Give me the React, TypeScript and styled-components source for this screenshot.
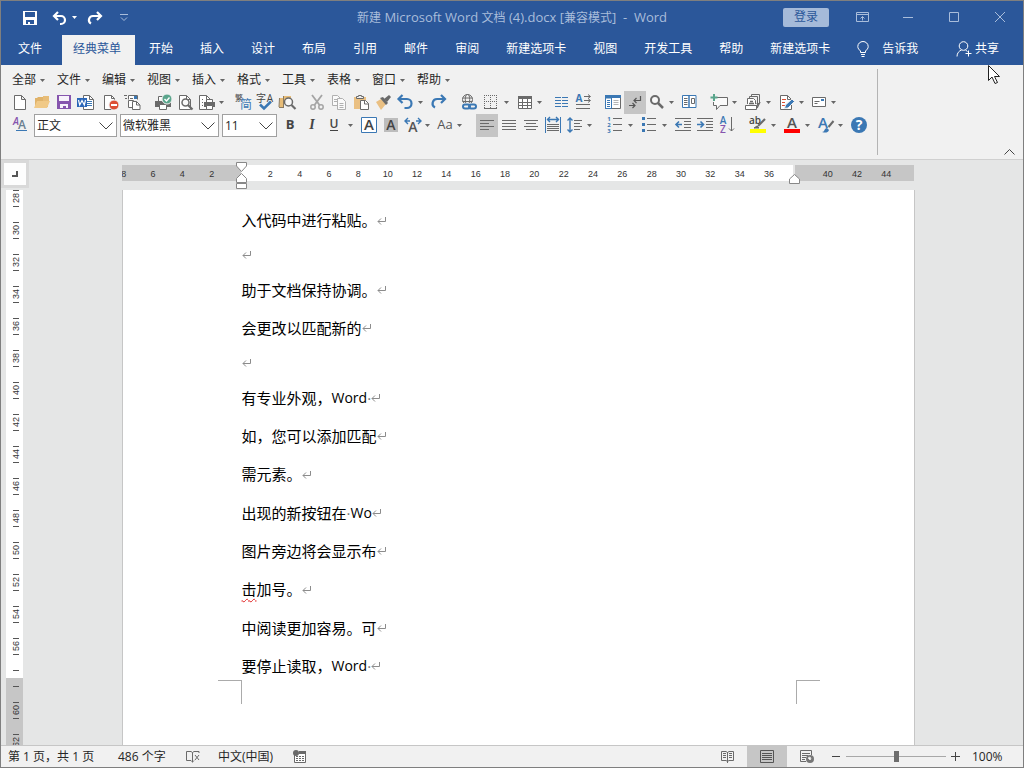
import React from "react";
import styled, { createGlobalStyle, css } from "styled-components";

const uiFont = `"Open Sans", "Noto Sans CJK SC", sans-serif`;
const blue = "#2b579a";
const gray = "#6a6a6a";
const accent = "#3b78b4";

const GlobalStyle = createGlobalStyle`
  *, *::before, *::after { box-sizing: border-box; }
  body { margin: 0; background: #e6e6e6; }
  button, select, input { font: inherit; color: inherit; margin: 0; }
  button { border: 0; background: none; padding: 0; }
`;

const Window = styled.div`
  display: flex;
  flex-direction: column;
  height: 100vh;
  overflow: hidden;
  border: 1px solid #7f7f7f;
  font: 12px/18px ${uiFont};
  color: #262626;
  background: #e6e6e6;
`;

const Svg = styled.svg`
  display: block;
  flex: none;
  overflow: visible;
  fill: none;
  stroke: ${gray};
  stroke-width: 1;
`;

/* ---------- title bar and tabs ---------- */

const TitleBar = styled.header`
  display: flex;
  align-items: center;
  height: 34px;
  flex: none;
  background: ${blue};
  color: #a9bddb;
`;

const QuickAccess = styled.div`
  display: flex;
  align-items: center;
  flex: 1 1 20px;
  padding-left: 17px;
`;

const QuickButton = styled.button<{ $width: number }>`
  display: flex;
  align-items: center;
  justify-content: center;
  width: ${(p) => p.$width}px;
  height: 28px;
`;

const Title = styled.h1`
  margin: 0 0 2px;
  font-size: 12px;
  font-weight: 400;
  white-space: pre;
`;

const TitleLatin = styled.span`
  font-size: 13px;
`;

const WindowControls = styled.div`
  display: flex;
  align-items: center;
  justify-content: flex-end;
  flex: 1 1 20px;
`;

const SignIn = styled.button`
  width: 46px;
  height: 19px;
  margin: 0 10px 2px 0;
  border-radius: 2px;
  background: #a5bad9;
  color: ${blue};
  line-height: 18px;
`;

const CaptionButton = styled.button`
  display: flex;
  align-items: center;
  justify-content: center;
  width: 46px;
  height: 30px;
  padding-bottom: 2px;
`;

const TabBar = styled.nav`
  display: flex;
  height: 30px;
  flex: none;
  background: ${blue};
  color: #fff;
`;

const Tab = styled.button<{ $kind?: "file" | "active" }>`
  display: flex;
  align-items: center;
  height: 30px;
  padding: 0 13px 2px 14px;
  white-space: nowrap;
  ${(p) => p.$kind === "file" && css`padding: 0 20px 2px 17px;`}
  ${(p) =>
    p.$kind === "active" &&
    css`
      padding: 0 14px 2px 11px;
      background: #f1f1f1;
      color: ${blue};
    `}
`;

const IconTab = styled(Tab)`
  gap: 13px;
  padding-left: 14px;
`;

const ShareTab = styled(Tab)`
  gap: 3px;
  margin-left: auto;
  padding-right: 24px;
`;

/* ---------- ribbon ---------- */

const Ribbon = styled.section`
  display: flex;
  flex: none;
  height: 95px;
  border-bottom: 1px solid #d0d0d0;
  background: #f1f1f1;
`;

const Commands = styled.div`
  display: flex;
  flex-direction: column;
  margin: 4px 0;
  padding: 0 8px 0 6px;
  border-right: 1px solid #b4b4b4;
`;

const CommandRow = styled.div`
  display: flex;
  align-items: center;
  height: 23px;
`;

const MenuRow = styled(CommandRow)`
  height: 22px;
  padding-left: 5px;
`;

const MenuButton = styled.button`
  display: flex;
  align-items: center;
  justify-content: space-between;
  width: 45px;
  height: 20px;
  padding-right: 12px;
`;

const ToolGroup = styled.div<{ $gap?: number }>`
  display: flex;
  align-items: center;
  margin-left: ${(p) => p.$gap ?? 0}px;
`;

const ToolButton = styled.button<{ $split?: "narrow" | "wide"; $pressed?: boolean }>`
  display: flex;
  align-items: center;
  width: ${(p) => (p.$split === "wide" ? 34 : p.$split ? 32 : 22)}px;
  height: 23px;
  padding: 0 0 1px 2px;
  gap: ${(p) => (p.$split === "wide" ? 4 : 3)}px;
  background: ${(p) => (p.$pressed ? "#c5c5c5" : "transparent")};
`;

const Combo = styled.label<{ $width: number }>`
  display: grid;
  align-items: center;
  width: ${(p) => p.$width}px;
  height: 23px;
  margin-right: 3px;
  border: 1px solid #a0a0a0;
  background: #fff;

  > * { grid-area: 1 / 1; }
  > svg { justify-self: end; margin-right: 3px; pointer-events: none; }
`;

const ComboSelect = styled.select`
  width: 100%;
  height: 21px;
  padding: 0 0 0 2px;
  border: 0;
  appearance: none;
  background: transparent;
`;

const CollapseButton = styled.button`
  display: flex;
  align-self: flex-end;
  margin: 0 8px 2px auto;
  padding: 2px 0;
`;

/* ---------- document ---------- */

const Workspace = styled.main`
  display: flex;
  flex: 1 1 0;
  min-height: 0;
  background: #e5e6e6;
`;

const RulerColumn = styled.div`
  display: flex;
  flex-direction: column;
  width: 28px;
  flex: none;
`;

const TabStop = styled.button`
  display: flex;
  align-items: center;
  justify-content: center;
  flex: none;
  width: 28px;
  height: 28px;
  margin-bottom: 2px;
  border: 3px solid #d9d9d9;
  background: #fdfdfd;
`;

const VerticalRuler = styled.ol`
  flex: 1 1 0;
  min-height: 0;
  width: 17px;
  margin: 0 0 0 5px;
  padding: 0 0 0 2px;
  overflow: hidden;
  list-style: none;
  background: linear-gradient(#fff 488px, #c6c6c6 488px);
  font: 9px/14px "Liberation Sans", sans-serif;
  color: #333;
`;

const VerticalMark = styled.li`
  display: flex;
  flex-direction: column;
  align-items: center;
  justify-content: space-between;
  height: 17px;
  margin-bottom: 15px;

  &::before,
  &::after {
    content: "";
    width: 6px;
    height: 1px;
    background: #555;
  }
`;

const VerticalNumber = styled.span`
  writing-mode: vertical-rl;
  transform: rotate(180deg);
`;

const Canvas = styled.div`
  display: flex;
  flex-direction: column;
  align-items: center;
  flex: 1 1 0;
  min-width: 0;
  padding-right: 16px;
`;

const HorizontalRuler = styled.div`
  position: relative;
  flex: none;
  width: 793px;
  height: 30px;
  padding-top: 5px;
`;

const RulerScale = styled.ol`
  display: grid;
  grid-template-columns: repeat(27, 1fr);
  width: 792px;
  height: 16px;
  margin: 0;
  padding: 0;
  overflow: hidden;
  list-style: none;
  background: linear-gradient(
    90deg,
    #c6c6c6 119px,
    #fff 119px,
    #fff 671px,
    #e6e6e6 671px,
    #e6e6e6 673px,
    #c6c6c6 673px
  );
  font: 9px/18px "Liberation Sans", sans-serif;
  color: #333;
  text-align: center;

  > li { margin: 0 0 0 -25px; }
`;

const IndentMarker = styled(Svg)<{ $left: number }>`
  position: absolute;
  top: 0;
  left: ${(p) => p.$left}px;
`;

const Page = styled.article`
  flex: 1 1 0;
  min-height: 0;
  width: 793px;
  padding-top: 11px;
  overflow: hidden;
  border: solid #c6c6c6;
  border-width: 0 1px;
  background: #fff;
`;

const Body = styled.div`
  display: flex;
  flex-direction: column;
  justify-content: space-between;
  height: 484px;
  padding-left: 119px;
  color: #000;
  font-size: 15px;
`;

const Line = styled.p<{ $empty?: boolean }>`
  display: flex;
  align-items: center;
  height: ${(p) => (p.$empty ? 31 : 38)}px;
  margin: 0;
  line-height: 38px;
  white-space: pre;
`;

const Latin = styled.span`
  font-size: 14px;
`;

const SpaceDot = styled.span`
  width: 4px;
  overflow: hidden;
  color: #777;
`;

const Misspelled = styled.span`
  text-decoration: underline wavy #e02020 1px;
  text-underline-offset: 3px;
`;

const CropMarks = styled.div`
  display: flex;
  justify-content: space-between;
  margin-top: -5px;
  padding: 0 94px 0 95px;
`;

const CropMark = styled.span<{ $side: "left" | "right" }>`
  width: 24px;
  height: 24px;
  border: solid #ababab;
  border-width: ${(p) => (p.$side === "left" ? "1px 1px 0 0" : "1px 0 0 1px")};
`;

/* ---------- status bar ---------- */

const StatusBar = styled.footer`
  display: flex;
  align-items: center;
  height: 22px;
  flex: none;
  padding-left: 7px;
  border-top: 1px solid #c6c6c6;
  background: #f1f1f1;
`;

const StatusButton = styled.button<{ $width: number }>`
  display: flex;
  align-items: center;
  width: ${(p) => p.$width}px;
  height: 21px;
  white-space: nowrap;
`;

const StatusRight = styled.div`
  display: flex;
  align-items: center;
  margin-left: auto;
`;

const ViewButton = styled.button<{ $active?: boolean }>`
  display: flex;
  align-items: center;
  justify-content: center;
  width: 40px;
  height: 21px;
  background: ${(p) => (p.$active ? "#c6c6c6" : "transparent")};
`;

const StepButton = styled.button`
  display: flex;
  align-items: center;
  justify-content: center;
  width: 19px;
  height: 21px;
`;

const ZoomSlider = styled.input`
  width: 100px;
  height: 20px;
  appearance: none;
  background: linear-gradient(#a8a8a8, #a8a8a8) center / 100% 1px no-repeat;

  &::-webkit-slider-thumb {
    appearance: none;
    width: 5px;
    height: 11px;
    background: #6d6d6d;
  }
`;

const ZoomValue = styled.button`
  width: 58px;
  height: 21px;
  padding-left: 7px;
  text-align: left;
`;

const Pointer = styled(Svg)`
  position: absolute;
  top: 65px;
  left: 988px;
  pointer-events: none;
`;

/* ---------- icons ---------- */

const Arrow = () => (
  <Svg width="5" height="3" viewBox="0 0 5 3" stroke="none">
    <path d="M0 0h5L2.500 3z" fill="#666" stroke="none" />
  </Svg>
);

const pageShape = "M4.500 2.500h7l4 4v10h-11z M11.500 2.500v4h4";

const glyph = (
  text: string,
  x: number,
  y: number,
  size: number,
  color: string,
  weight = 400,
  extra: React.SVGProps<SVGTextElement> = {}
) => (
  <text x={x} y={y} fontSize={size} fill={color} stroke="none" fontWeight={weight} textAnchor="middle" {...extra}>
    {text}
  </text>
);

const icons: Record<string, React.ReactNode> = {
  new: <path d={pageShape} fill="#fff" />,
  open: (
    <g stroke="none">
      <path d="M3 14V5h2l1-1h5l1 2h4v8z" fill="#e0b36a" />
      <path d="M11 3h6v5h-6z" fill="#e8bd78" />
      <path d="M2 15l3-7h13l-3 7z" fill="#f0c987" />
    </g>
  ),
  save: (
    <g stroke="none">
      <path d="M3 2h14v14H3z" fill="#8655ae" />
      <path d="M5 3h10v5H5zM6 11h8v4h-2v-2H9v2H6z" fill="#f7f2fb" />
    </g>
  ),
  word: (
    <>
      <path d="M7.500 2.500h6l4 4v10h-10z" fill="#fff" />
      <path d="M13.500 2.500v4h4" />
      <path d="M11 8.500h5M11 10.500h5M11 12.500h5" stroke={accent} />
      <path d="M1 5h10v9H1z" fill="#2a66b8" stroke="none" />
      <path d="M2.500 7l1.200 5L6 7.500 8.300 12l1.200-5" stroke="#fff" strokeWidth="1.200" />
    </>
  ),
  remove: (
    <>
      <path d="M2.500 2.500h7l3 3v11h-10z" fill="#fff" />
      <path d="M9.500 2.500v3h3" />
      <circle cx="12" cy="12" r="5" fill="#dc4e34" stroke="#f1f1f1" />
      <path d="M9 12h6" stroke="#fff" strokeWidth="2" />
    </>
  ),
  props: (
    <>
      <path d="M0 2.500h3M1 5.500h2" />
      <path d="M4.500 6.500v-4h9v4" fill="#fff" />
      <path d="M6 5.500h3" />
      <path d="M10 3h3v3h-3z" fill={accent} stroke="none" />
      <path d="M4.500 7.500h5v7h-5z" fill="#fff" />
      <path d="M8.500 8.500h4l3.500 3.500v4.500H8.500z" fill="#fff" />
      <path d="M12.500 8.500v3.500h3.500" />
    </>
  ),
  print: (
    <>
      <path d="M1 8h16v6H1z" fill={gray} stroke="none" />
      <path d="M4.500 8V3.500h6M5.500 11.500h7v5h-7z" fill="#fff" />
      <circle cx="13" cy="6" r="5" fill="#5aa58c" stroke="#f1f1f1" />
      <path d="M10.500 6l2 2L15.500 4.500" stroke="#fff" strokeWidth="1.400" />
    </>
  ),
  preview: (
    <>
      <path d="M3.500 2.500h7l4 4v10h-11z" fill="#fff" />
      <path d="M10.500 2.500v4h4" />
      <circle cx="9.500" cy="9.500" r="3.500" fill="#f8f8f8" strokeWidth="1.500" />
      <path d="M12 12l4.500 4.500" strokeWidth="2.200" />
    </>
  ),
  setup: (
    <>
      <path d="M9 16.500H1.500v-14h7l4 4" fill="#fff" />
      <path d="M8.500 2.500v4h4M4 6.500h1M4 9.500h1M4 12.500h1" />
      <path d="M6 9h11v5H6z" fill={gray} stroke="none" />
      <path d="M8.500 9V6.500h6V9M8.500 12.500h6v4h-6z" fill="#fff" />
    </>
  ),
  simplified: (
    <>
      {glyph("繁", 5, 8, 8, "#444")}
      {glyph("简", 12, 16, 12, accent)}
    </>
  ),
  spelling: (
    <>
      {glyph("字", 5, 9, 10, "#444")}
      {glyph("A", 14, 9, 10, "#444")}
      <path d="M4 11.500l4 4L15 8.500" stroke={accent} strokeWidth="2.500" />
    </>
  ),
  research: (
    <>
      <path d="M2 5h3v10H1zM6 3h4v4H6zM9 3h4v2H9z" fill="#e8bd78" stroke="none" />
      <path d="M1.500 5l-.500 9M5.500 3v12M1 14.500h5" stroke="#8a7a60" />
      <circle cx="10.500" cy="9" r="4" fill="#f8f8f8" strokeWidth="1.500" />
      <path d="M13.500 12l4 4" strokeWidth="2.200" />
    </>
  ),
  cut: (
    <g stroke="#a4a4a4">
      <path d="M4 2l7.500 10M14 2L6.500 12" strokeWidth="1.800" />
      <circle cx="5" cy="14" r="2.200" strokeWidth="1.500" />
      <circle cx="13" cy="14" r="2.200" strokeWidth="1.500" />
    </g>
  ),
  copy: (
    <g stroke="#b0b0b0" fill="#fafafa">
      <path d="M2.500 2.500h5l3 3v7h-8z" />
      <path d="M7.500 5.500h5l3 3v8h-8z" />
      <path d="M4 6.500h3M4 8.500h3M9.500 10.500h4M9.500 12.500h4M9.500 14.500h4" />
    </g>
  ),
  paste: (
    <>
      <path d="M2 4h12v12H2z" fill="#eac083" stroke="none" />
      <path d="M4.500 5.500h7V3.500H9.500v-1h-3v1h-2z" fill="#eee" />
      <path d="M8.500 7.500h5l3 3v6h-8z" fill="#fff" />
      <path d="M12.500 7.500v3.500h4" />
    </>
  ),
  painter: (
    <g stroke="none">
      <path d="M2 9l5-3 5 5-5 6z" fill="#eac083" />
      <path d="M6 5l3-1 5 6-2 2z" fill={gray} />
      <path d="M10 6l5-4 2 2-4 5z" fill={gray} />
    </g>
  ),
  undo: (
    <path d="M6.500 2L2.500 6l4 4M3 6h8a4.500 4.500 0 0 1 0 9H8.500" stroke={accent} strokeWidth="2.200" />
  ),
  redo: (
    <path d="M11 2l4 4-4 4M15 6H7a4.500 4.500 0 0 0-2 8.500" stroke={accent} strokeWidth="2.200" />
  ),
  link: (
    <>
      <circle cx="7.500" cy="6.500" r="5" />
      <ellipse cx="7.500" cy="6.500" rx="2.200" ry="5" />
      <path d="M2.500 5h10M2.500 8.500h10" />
      <path d="M1 10h17v8H1z" fill="#f1f1f1" stroke="none" />
      <rect x="3" y="11.500" width="7" height="4" rx="2" stroke={accent} strokeWidth="2" />
      <rect x="9" y="11.500" width="7" height="4" rx="2" stroke={accent} strokeWidth="2" />
    </>
  ),
  borders: (
    <>
      <path d="M2 2.500h13M2 8.500h13M2.500 2v13M8.500 2v13M14.500 2v13" strokeDasharray="1 1" />
      <path d="M2 15.500h13" />
    </>
  ),
  table: (
    <>
      <path d="M2.500 3.500h13v12h-13z" fill="#fff" />
      <path d="M2 3h14v3H2z" fill={gray} stroke="none" />
      <path d="M2.500 9.500h13M2.500 12.500h13M6.500 6v9M11.500 6v9" />
    </>
  ),
  columns: (
    <path
      d="M3 4.500h6M3 7.500h6M3 10.500h6M3 13.500h6M10 4.500h6M10 7.500h6M10 10.500h6M10 13.500h6"
      stroke={accent}
    />
  ),
  direction: (
    <>
      {glyph("A", 5, 9, 10, accent, 700)}
      <path d="M10 3.500h6M10 7.500h6M2 11.500h14M2 15.500h14M14 1.500l2.500 2L14 5.500M14 5.500l2.500 2L14 9.500" />
    </>
  ),
  nav: (
    <>
      <path d="M1.500 2.500h15v13h-15z" fill="#fff" />
      <path d="M1 2h16v3H1z" fill={accent} stroke="none" />
      <path d="M1.500 5v10.500H7.500V5z" stroke={accent} />
      <path d="M3 7.500h3M3 9.500h3M3 11.500h3M3 13.500h3" stroke={accent} />
      <path d="M9.500 7.500h5M9.500 9.500h5M9.500 11.500h5" stroke="#b5b5b5" />
    </>
  ),
  marks: (
    <path d="M14.500 3v4.500H8M10.500 5L8 7.500l2.500 2.500M3 12.500h6M6.500 10L9 12.500 6.500 15" stroke="#555" strokeWidth="1.200" />
  ),
  zoom: (
    <>
      <circle cx="7" cy="7" r="4" fill="#f8f8f8" strokeWidth="2" />
      <path d="M10 10l5 5" strokeWidth="2.500" />
    </>
  ),
  reading: (
    <>
      <path d="M2.500 2.500h6.500v12H2.500zM9 2.500h7v12H9z" fill="#fff" stroke={accent} />
      <path d="M4 5.500h3.500M4 7.500h3.500M4 9.500h3.500M4 11.500h3.500M11.500 5.500h3v5h-3z" />
    </>
  ),
  comment: (
    <>
      <path d="M7 4.500h10.500v8H10l-3.500 4v-4h-3V9" fill="#fafafa" />
      <path d="M4 1v7M.500 4.500h7" stroke="#5aa58c" strokeWidth="2" />
    </>
  ),
  windows: (
    <>
      <path d="M7.500 4V1.500h8v9h-3M5.500 6V3.500h8v9h-3" />
      <path d="M3.500 11V5.500h6l2 2V11" fill="#fff" />
      <path d="M1.500 12.500h11v4h-11z" fill="#fff" />
      <path d="M5 10.500h5M6 8.500h3M13 15l3-6" strokeWidth="1.500" />
    </>
  ),
  track: (
    <>
      <path d="M2.500 2.500h7l4 4v10h-11z" fill="#fff" />
      <path d="M9.500 2.500v4h4" />
      <path d="M4 6.500h4M4 9.500h3M4 12.500h4" stroke="#dc4e34" />
      <path d="M6.500 15.500l1-3.500L14 6l2.500 2.500L10 15z" fill={accent} stroke="#f1f1f1" />
    </>
  ),
  mail: (
    <>
      <path d="M2.500 4.500h13v9h-13z" fill="#fff" />
      <path d="M4.500 8.500h5M4.500 10.500h3" />
      <path d="M11 6h3v2h-3z" fill={accent} stroke="none" />
    </>
  ),
  styles: (
    <>
      {glyph("A", 6, 9, 10, "#8655ae", 600, { fontStyle: "italic" })}
      {glyph("A", 12, 13, 12, "#6a8090", 600)}
      <path d="M6 14.500h11" stroke={accent} />
    </>
  ),
  bold: glyph("B", 8, 13, 13, "#444", 700),
  italic: glyph("I", 8, 13, 14, "#444", 700, { fontStyle: "italic", fontFamily: "Liberation Serif" }),
  underline: (
    <>
      {glyph("U", 8, 12, 12, "#444", 600)}
      <path d="M4 14.500h8" stroke="#444" />
    </>
  ),
  boxed: (
    <>
      <path d="M1.500 1.500h15v15h-15z" stroke={accent} fill="#fff" />
      {glyph("A", 9, 14, 15, "#444", 600)}
    </>
  ),
  shaded: (
    <>
      <path d="M2 2h14v14H2z" fill="#bdbdbd" stroke="none" />
      {glyph("A", 9, 14, 14, "#444", 600)}
    </>
  ),
  scale: (
    <>
      <path d="M4 2L1 5l3 3M1 5h5M14 2l3 3-3 3M17 5h-5" stroke={accent} strokeWidth="1.400" />
      {glyph("A", 9, 16, 14, "#555", 600)}
    </>
  ),
  changecase: glyph("Aa", 9, 13, 13, "#555", 500),
  alignLeft: <path d="M2 4.500h14M2 7.500h9M2 10.500h14M2 13.500h9" />,
  justify: <path d="M2 4.500h14M2 7.500h14M2 10.500h14M2 13.500h14" />,
  center: <path d="M2 4.500h14M4 7.500h10M2 10.500h14M4 13.500h10" />,
  distribute: (
    <>
      <path d="M1.500 1v16M16.500 1v16" stroke={accent} />
      <path d="M3 3.500h12M6 1L3.500 3.500 6 6M12 1l2.500 2.500L12 6" stroke={accent} strokeWidth="1.400" />
      <path d="M3 8.500h12M3 10.500h12M3 12.500h12M3 14.500h12" />
    </>
  ),
  spacing: (
    <>
      <path d="M4 2v14M1.500 4.500L4 2l2.500 2.500M1.500 13.500L4 16l2.500-2.500" stroke={accent} strokeWidth="1.400" />
      <path d="M8 4.500h8M8 7.500h6M8 10.500h8M8 13.500h6" />
    </>
  ),
  numbers: (
    <>
      {glyph("1", 3, 5, 6, accent, 700)}
      {glyph("2", 3, 11, 6, accent, 700)}
      {glyph("3", 3, 17, 6, accent, 700)}
      <path d="M7 2.500h9M7 8.500h9M7 14.500h9" />
    </>
  ),
  bullets: (
    <>
      <path d="M2 1h3v3H2zM2 7h3v3H2zM2 13h3v3H2z" fill={accent} stroke="none" />
      <path d="M7 2.500h9M7 8.500h9M7 14.500h9" />
    </>
  ),
  outdent: (
    <>
      <path d="M1 2.500h16M10 5.500h7M10 8.500h7M10 11.500h7M1 14.500h16" />
      <path d="M8 8.500H2M5 5.500l-3 3 3 3" stroke={accent} strokeWidth="1.600" />
    </>
  ),
  indent: (
    <>
      <path d="M1 2.500h16M10 5.500h7M10 8.500h7M10 11.500h7M1 14.500h16" />
      <path d="M1 8.500h6M4.500 5.500l3 3-3 3" stroke={accent} strokeWidth="1.600" />
    </>
  ),
  sort: (
    <>
      {glyph("A", 5, 8, 10, accent, 600)}
      {glyph("Z", 5, 17, 10, "#8655ae", 600)}
      <path d="M13.500 1v14M11 12.500l2.500 2.500 2.500-2.500" />
    </>
  ),
  highlight: (
    <>
      {glyph("ab", 6, 8, 10, "#444", 600)}
      <path d="M16 3l-7 7" strokeWidth="2.200" />
      <path d="M5 12l3-2 2 2z" fill={gray} />
      <path d="M1 13h16v4H1z" fill="#ff0" stroke="none" />
    </>
  ),
  fontcolor: (
    <>
      {glyph("A", 9, 12, 15, "#555", 600)}
      <path d="M1 13h16v4H1z" fill="#f00" stroke="none" />
    </>
  ),
  effects: (
    <>
      {glyph("A", 6, 12, 15, accent, 600)}
      <path d="M16.500 5l-5 6" strokeWidth="2" />
      <path d="M5 16c3 0 2-4 5-4l2 2c-1 3-4 3-7 2z" fill={accent} stroke="none" />
    </>
  ),
  help: (
    <>
      <circle cx="10" cy="9" r="8" fill={accent} stroke="none" />
      {glyph("?", 10, 14, 14, "#fff", 700)}
    </>
  ),
};

type ToolSpec = { icon: string; label: string; split?: "narrow" | "wide"; pressed?: boolean };

const Tool = ({ icon, label, split, pressed }: ToolSpec) => (
  <ToolButton type="button" title={label} aria-label={label} $split={split} $pressed={pressed}>
    <Svg width="18" height="18" viewBox="0 0 18 18" aria-hidden>
      {icons[icon]}
    </Svg>
    {split && <Arrow />}
  </ToolButton>
);

type GroupSpec = { gap?: number; tools: ToolSpec[] };

const Groups = ({ groups }: { groups: GroupSpec[] }) => (
  <>
    {groups.map((g, i) => (
      <ToolGroup key={i} $gap={g.gap}>
        {g.tools.map((t) => (
          <Tool key={t.icon} {...t} />
        ))}
      </ToolGroup>
    ))}
  </>
);

const standardGroups: GroupSpec[] = [
  {
    gap: 1,
    tools: [
      { icon: "new", label: "新建" },
      { icon: "open", label: "打开" },
      { icon: "save", label: "保存" },
      { icon: "word", label: "另存为" },
    ],
  },
  { gap: 4, tools: [{ icon: "remove", label: "权限" }, { icon: "props", label: "属性" }] },
  {
    gap: 8,
    tools: [
      { icon: "print", label: "打印" },
      { icon: "preview", label: "打印预览" },
      { icon: "setup", label: "页面设置", split: "narrow" },
    ],
  },
  {
    gap: 4,
    tools: [
      { icon: "simplified", label: "简繁转换" },
      { icon: "spelling", label: "拼写和语法" },
      { icon: "research", label: "信息检索" },
    ],
  },
  {
    gap: 8,
    tools: [
      { icon: "cut", label: "剪切" },
      { icon: "copy", label: "复制" },
      { icon: "paste", label: "粘贴" },
      { icon: "painter", label: "格式刷" },
      { icon: "undo", label: "撤消", split: "wide" },
      { icon: "redo", label: "恢复" },
    ],
  },
  {
    gap: 8,
    tools: [
      { icon: "link", label: "超链接" },
      { icon: "borders", label: "边框", split: "wide" },
      { icon: "table", label: "表格", split: "narrow" },
    ],
  },
  { gap: 4, tools: [{ icon: "columns", label: "分栏" }, { icon: "direction", label: "文字方向" }] },
  {
    gap: 8,
    tools: [
      { icon: "nav", label: "导航窗格" },
      { icon: "marks", label: "显示编辑标记", pressed: true },
      { icon: "zoom", label: "显示比例", split: "narrow" },
      { icon: "reading", label: "阅读版式" },
    ],
  },
  {
    gap: 8,
    tools: [
      { icon: "comment", label: "批注", split: "wide" },
      { icon: "windows", label: "切换窗口", split: "wide" },
      { icon: "track", label: "修订", split: "narrow" },
      { icon: "mail", label: "邮件", split: "narrow" },
    ],
  },
];

const formatGroups: GroupSpec[] = [
  {
    tools: [
      { icon: "bold", label: "加粗" },
      { icon: "italic", label: "倾斜" },
      { icon: "underline", label: "下划线", split: "wide" },
    ],
  },
  {
    tools: [
      { icon: "boxed", label: "字符边框" },
      { icon: "shaded", label: "字符底纹" },
      { icon: "scale", label: "字符缩放", split: "narrow" },
      { icon: "changecase", label: "更改大小写", split: "narrow" },
    ],
  },
  {
    gap: 10,
    tools: [
      { icon: "alignLeft", label: "左对齐", pressed: true },
      { icon: "justify", label: "两端对齐" },
      { icon: "center", label: "居中" },
      { icon: "distribute", label: "分散对齐" },
      { icon: "spacing", label: "行距", split: "narrow" },
    ],
  },
  {
    gap: 8,
    tools: [
      { icon: "numbers", label: "编号", split: "wide" },
      { icon: "bullets", label: "项目符号", split: "wide" },
      { icon: "outdent", label: "减少缩进量" },
      { icon: "indent", label: "增加缩进量" },
      { icon: "sort", label: "排序" },
    ],
  },
  {
    gap: 9,
    tools: [
      { icon: "highlight", label: "突出显示", split: "wide" },
      { icon: "fontcolor", label: "字体颜色", split: "wide" },
      { icon: "effects", label: "文本效果", split: "narrow" },
      { icon: "help", label: "帮助" },
    ],
  },
];

const menus = ["全部", "文件", "编辑", "视图", "插入", "格式", "工具", "表格", "窗口", "帮助"];

const tabs = [
  "开始",
  "插入",
  "设计",
  "布局",
  "引用",
  "邮件",
  "审阅",
  "新建选项卡",
  "视图",
  "开发工具",
  "帮助",
  "新建选项卡",
];

const combos = [
  { label: "样式", value: "正文", width: 83 },
  { label: "字体", value: "微软雅黑", width: 99 },
  { label: "字号", value: "11", width: 55 },
];

const lines: React.ReactNode[] = [
  "入代码中进行粘贴。",
  null,
  "助于文档保持协调。",
  "会更改以匹配新的",
  null,
  <>有专业外观，<Latin>Word</Latin><SpaceDot>·</SpaceDot></>,
  "如，您可以添加匹配",
  "需元素。",
  <>出现的新按钮在<SpaceDot>·</SpaceDot><Latin>Wo</Latin></>,
  "图片旁边将会显示布",
  <><Misspelled>击</Misspelled>加号。</>,
  "中阅读更加容易。可",
  <>要停止读取，<Latin>Word</Latin><SpaceDot>·</SpaceDot></>,
];

const rulerValues = Array.from({ length: 27 }, (_, i) => i * 2 - 8);
const verticalValues = Array.from({ length: 18 }, (_, i) => 28 + i * 2);

const ParagraphMark = () => (
  <Svg width="10" height="7" viewBox="0 0 10 7" aria-hidden>
    <path d="M8.500 0v4.500H1M4 1.500l-3 3 3 3" stroke="#8c8c8c" />
  </Svg>
);

export default function App() {
  return (
    <Window>
      <GlobalStyle />
      <TitleBar>
        <QuickAccess>
          <QuickButton type="button" aria-label="保存" $width={24}>
            <Svg width="14" height="14" viewBox="0 0 14 14">
              <path d="M0 0h14v14H0zM2 1v5h10V1zM3 9v4h2v-2h2v2h4V9z" fill="#fff" fillRule="evenodd" stroke="none" />
            </Svg>
          </QuickButton>
          <QuickButton type="button" aria-label="撤消" $width={45}>
            <Svg width="25" height="14" viewBox="0 0 25 14">
              <path d="M6 1L2 5l4 4M2 5h7a4 4 0 0 1 0 8H8" stroke="#fff" strokeWidth="2.200" />
              <path d="M20 5h5l-2.500 3z" fill="#fff" stroke="none" />
            </Svg>
          </QuickButton>
          <QuickButton type="button" aria-label="恢复" $width={16}>
            <Svg width="16" height="14" viewBox="0 0 16 14">
              <path d="M10 1l4 4-4 4M14 5H6a4 4 0 0 0-2 7.500" stroke="#fff" strokeWidth="2.200" />
            </Svg>
          </QuickButton>
          <QuickButton type="button" aria-label="自定义快速访问工具栏" $width={42}>
            <Svg width="8" height="8" viewBox="0 0 8 8">
              <path d="M0 .5h8M1 3.500L4 6.500l3-3" stroke="#a9bddb" />
            </Svg>
          </QuickButton>
        </QuickAccess>
        <Title>
          新建<TitleLatin> Microsoft Word </TitleLatin>文档<TitleLatin> (4).docx [</TitleLatin>兼容模式
          <TitleLatin>]  -  Word</TitleLatin>
        </Title>
        <WindowControls>
          <SignIn type="button">登录</SignIn>
          <CaptionButton type="button" aria-label="功能区显示选项">
            <Svg width="13" height="10" viewBox="0 0 13 10">
              <path d="M.5.5h12v9H.5zM.5 2.500h12M6.500 8.500V4.500M4.500 6.500l2-2 2 2" stroke="#a9bddb" />
            </Svg>
          </CaptionButton>
          <CaptionButton type="button" aria-label="最小化">
            <Svg width="10" height="10" viewBox="0 0 10 10">
              <path d="M0 5.500h10" stroke="#a9bddb" />
            </Svg>
          </CaptionButton>
          <CaptionButton type="button" aria-label="最大化">
            <Svg width="10" height="10" viewBox="0 0 10 10">
              <path d="M.5.5h9v9h-9z" stroke="#a9bddb" />
            </Svg>
          </CaptionButton>
          <CaptionButton type="button" aria-label="关闭">
            <Svg width="10" height="10" viewBox="0 0 10 10">
              <path d="M0 0l10 10M10 0L0 10" stroke="#a9bddb" />
            </Svg>
          </CaptionButton>
        </WindowControls>
      </TitleBar>

      <TabBar>
        <Tab type="button" $kind="file">文件</Tab>
        <Tab type="button" $kind="active">经典菜单</Tab>
        {tabs.map((t, i) => (
          <Tab type="button" key={i}>{t}</Tab>
        ))}
        <IconTab type="button">
          <Svg width="12" height="16" viewBox="0 0 12 16">
            <path
              d="M3.500 11.500V10C2 8.500 .8 7.500 .8 5.500a5.200 5 0 0 1 10.400 0c0 2-1.200 3-2.700 4.500v1.500zM4 13.500h4M4.500 15.500h3"
              stroke="#fff"
            />
          </Svg>
          告诉我
        </IconTab>
        <ShareTab type="button">
          <Svg width="16" height="16" viewBox="0 0 16 16">
            <circle cx="7.500" cy="5" r="4.300" stroke="#fff" />
            <path d="M1 15.500c0-3.500 2-5.500 4.500-6.500M9.500 9l2 1.500M12.500 9.500v6M9.500 12.500h6" stroke="#fff" />
          </Svg>
          共享
        </ShareTab>
      </TabBar>

      <Ribbon>
        <Commands>
          <MenuRow>
            {menus.map((m) => (
              <MenuButton type="button" key={m}>
                {m}
                <Arrow />
              </MenuButton>
            ))}
          </MenuRow>
          <CommandRow>
            <Groups groups={standardGroups} />
          </CommandRow>
          <CommandRow>
            <ToolGroup $gap={1}>
              <Tool icon="styles" label="样式窗格" />
            </ToolGroup>
            <ToolGroup $gap={4}>
              {combos.map((c) => (
                <Combo key={c.label} $width={c.width}>
                  <ComboSelect aria-label={c.label} defaultValue={c.value}>
                    <option>{c.value}</option>
                  </ComboSelect>
                  <Svg width="14" height="8" viewBox="0 0 14 8" aria-hidden>
                    <path d="M.5.5L7 7 13.500.5" stroke="#444" />
                  </Svg>
                </Combo>
              ))}
            </ToolGroup>
            <Groups groups={formatGroups} />
          </CommandRow>
        </Commands>
        <CollapseButton type="button" aria-label="折叠功能区">
          <Svg width="11" height="6" viewBox="0 0 11 6">
            <path d="M.5 5.500l5-5 5 5" stroke="#444" />
          </Svg>
        </CollapseButton>
      </Ribbon>

      <Workspace>
        <RulerColumn>
          <TabStop type="button" aria-label="左对齐制表符">
            <Svg width="6" height="6" viewBox="0 0 6 6">
              <path d="M0 5h5V0" stroke="#555" strokeWidth="2" />
            </Svg>
          </TabStop>
          <VerticalRuler>
            {verticalValues.map((v) => (
              <VerticalMark key={v}>
                {v !== 58 && <VerticalNumber>{v}</VerticalNumber>}
              </VerticalMark>
            ))}
          </VerticalRuler>
        </RulerColumn>
        <Canvas>
          <HorizontalRuler>
            <RulerScale>
              {rulerValues.map((v) => (
                <li key={v}>{v === 0 || v === 38 ? "" : Math.abs(v)}</li>
              ))}
            </RulerScale>
            <IndentMarker $left={114} width="11" height="30" viewBox="0 0 11 30">
              <path
                d="M.5 2.500h10v3.500L5.500 11.500.5 6zM5.500 13.500l5 5v4H.5v-4zM.5 23.500h10v5H.5z"
                fill="#fff"
                stroke="#888"
              />
            </IndentMarker>
            <IndentMarker $left={667} width="11" height="30" viewBox="0 0 11 30">
              <path d="M5.500 14.500l5 4.500v4.500H.5V19z" fill="#fff" stroke="#888" />
            </IndentMarker>
          </HorizontalRuler>
          <Page>
            <Body>
              {lines.map((l, i) => (
                <Line key={i} $empty={l === null}>
                  {l}
                  <ParagraphMark />
                </Line>
              ))}
            </Body>
            <CropMarks>
              <CropMark $side="left" />
              <CropMark $side="right" />
            </CropMarks>
          </Page>
        </Canvas>
      </Workspace>

      <StatusBar>
        <StatusButton type="button" $width={110}>第 1 页，共 1 页</StatusButton>
        <StatusButton type="button" $width={68}>486 个字</StatusButton>
        <StatusButton type="button" aria-label="校对" $width={32}>
          <Svg width="15" height="13" viewBox="0 0 15 13">
            <path d="M6.500 12.500V2.500L5 1.500H.5v9H5l1.500 1.500L8 10.500M6.500 2.500L8 1.500h5V3M9 5l4 5M13 5l-4 5" />
          </Svg>
        </StatusButton>
        <StatusButton type="button" $width={75}>中文(中国)</StatusButton>
        <StatusButton type="button" aria-label="宏" $width={20}>
          <Svg width="13" height="13" viewBox="0 0 13 13">
            <path d="M1.500 5v7.500h11v-11H6" fill="#fff" />
            <path d="M6 1h7v3H6z" fill={gray} stroke="none" />
            <path d="M3 6.500h8M3 8.500h8M3 10.500h8" strokeDasharray="2 1" />
            <circle cx="3" cy="3" r="3" fill={gray} stroke="none" />
          </Svg>
        </StatusButton>
        <StatusRight>
          <ViewButton type="button" aria-label="阅读视图">
            <Svg width="13" height="13" viewBox="0 0 13 13">
              <path d="M.5 1.500H5l1.500 1 1.500-1h4.500v9H8l-1.500 1-1.500-1H.5zM6.500 2v11M2 3.500h3M2 5.500h3M2 7.500h3M8 3.500h3M8 5.500h3M8 7.500h3" />
            </Svg>
          </ViewButton>
          <ViewButton type="button" aria-label="页面视图" $active>
            <Svg width="14" height="13" viewBox="0 0 14 13">
              <path d="M.5.5h13v12H.5zM2 3.500h10M2 5.500h10M2 7.500h10M2 9.500h10" stroke="#555" />
            </Svg>
          </ViewButton>
          <ViewButton type="button" aria-label="Web 版式视图">
            <Svg width="14" height="13" viewBox="0 0 14 13">
              <path d="M6 11.500H.5V.5h11V5M2 3.500h8M2 5.500h6M2 7.500h4M2 9.500h3" />
              <circle cx="10" cy="9" r="4" fill="#777" stroke="none" />
              <path d="M8 8l2-1 1 2-1 1z" fill="#fff" stroke="#ddd" />
            </Svg>
          </ViewButton>
          <StepButton type="button" aria-label="缩小">
            <Svg width="9" height="9" viewBox="0 0 9 9">
              <path d="M0 4.500h8" stroke="#444" />
            </Svg>
          </StepButton>
          <ZoomSlider type="range" aria-label="显示比例" min={0} max={200} defaultValue={100} />
          <StepButton type="button" aria-label="放大">
            <Svg width="9" height="9" viewBox="0 0 9 9">
              <path d="M0 4.500h9M4.500 0v9" stroke="#444" />
            </Svg>
          </StepButton>
          <ZoomValue type="button">100%</ZoomValue>
        </StatusRight>
      </StatusBar>

      <Pointer width="13" height="20" viewBox="0 0 13 20" aria-hidden>
        <path d="M.5 .5v15l3.500-3.500 3 6.500 2.500-1-3-6h5z" fill="#fff" stroke="#222" />
      </Pointer>
    </Window>
  );
}
